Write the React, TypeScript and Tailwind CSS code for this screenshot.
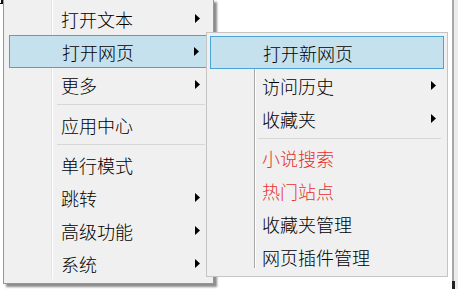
type Item = { label: string; sub?: boolean; red?: boolean; active?: boolean } | "sep";

const MAIN: Item[] = [
  { label: "打开文本", sub: true },
  { label: "打开网页", sub: true, active: true },
  { label: "更多", sub: true },
  "sep",
  { label: "应用中心" },
  "sep",
  { label: "单行模式" },
  { label: "跳转", sub: true },
  { label: "高级功能", sub: true },
  { label: "系统", sub: true },
];

const WEB: Item[] = [
  { label: "打开新网页", active: true },
  { label: "访问历史", sub: true },
  { label: "收藏夹", sub: true },
  "sep",
  { label: "小说搜索", red: true },
  { label: "热门站点", red: true },
  { label: "收藏夹管理" },
  { label: "网页插件管理" },
];

function Arrow() {
  return (
    <svg width="5" height="9" viewBox="0 0 5 9" className="shrink-0">
      <path d="M0 0 L5 4.5 L0 9 Z" fill="#000" />
    </svg>
  );
}

function MenuRows({ items, sepH }: { items: Item[]; sepH: string }) {
  return (
    <>
      {items.map((it, i) =>
        it === "sep" ? (
          <div key={i} className={`flex ${sepH} items-center pl-[48px] pr-[3px]`}>
            <div className="h-px w-full bg-[#d7d7d7]" />
          </div>
        ) : (
          <div
            key={i}
            className={`relative flex h-[33px] items-center pr-[8px] pl-[52px] ${
              it.active ? "border border-[#4aa3d6] bg-[#c5e1ee] pl-[51px] pr-[7px]" : ""
            }`}
          >
            <span
              className={`flex-1 pt-[1px] text-[18px] leading-none font-light ${
                it.red ? "text-[#e5302f]" : "text-black"
              }`}
            >
              {it.label}
            </span>
            {it.sub && <Arrow />}
          </div>
        )
      )}
    </>
  );
}

export default function App() {
  return (
    <div className="relative h-[289px] w-[458px] overflow-hidden bg-white font-['Microsoft_YaHei','Noto_Sans_CJK_SC',sans-serif]">
      {/* underlying window edge */}
      <div className="absolute top-0 right-0 bottom-0 flex w-[6px]">
        <div className="w-[2px] bg-[#a8a8a8]" />
        <div className="flex-1 bg-[#ececec]" />
      </div>
      <div className="absolute right-[3px] bottom-0 h-[8px] w-[3px] bg-[#222]" />
      <div className="absolute top-0 left-0 h-[4px] w-[3px] border-r-2 border-b border-[#111]" />

      {/* main menu */}
      <div className="absolute top-[-1px] left-[3px] h-[285px] w-[211px] border border-[#979797] bg-[#f0f0f0] shadow-[3px_3px_2px_rgba(0,0,0,0.45)]">
        <div className="absolute top-0 bottom-[4px] left-[47px] flex">
          <div className="w-px bg-[#e2e3e3]" />
          <div className="w-px bg-white" />
        </div>
        <div className="relative flex flex-col pt-[2px] pr-[5px] pb-[3px] pl-[5px]">
          <MenuRows items={MAIN} sepH="h-[7px]" />
        </div>
      </div>

      {/* web submenu */}
      <div className="absolute top-[32px] left-[206px] h-[245px] w-[242px] border border-[#c4c4c4] bg-[#f0f0f0]">
        <div className="absolute top-[5px] bottom-[8px] left-[47px] flex">
          <div className="w-px bg-[#a9a9a9]" />
          <div className="w-px bg-white" />
        </div>
        <div className="relative flex flex-col px-[3px] py-[3px]">
          <MenuRows items={WEB} sepH="h-[6px]" />
        </div>
      </div>
    </div>
  );
}
